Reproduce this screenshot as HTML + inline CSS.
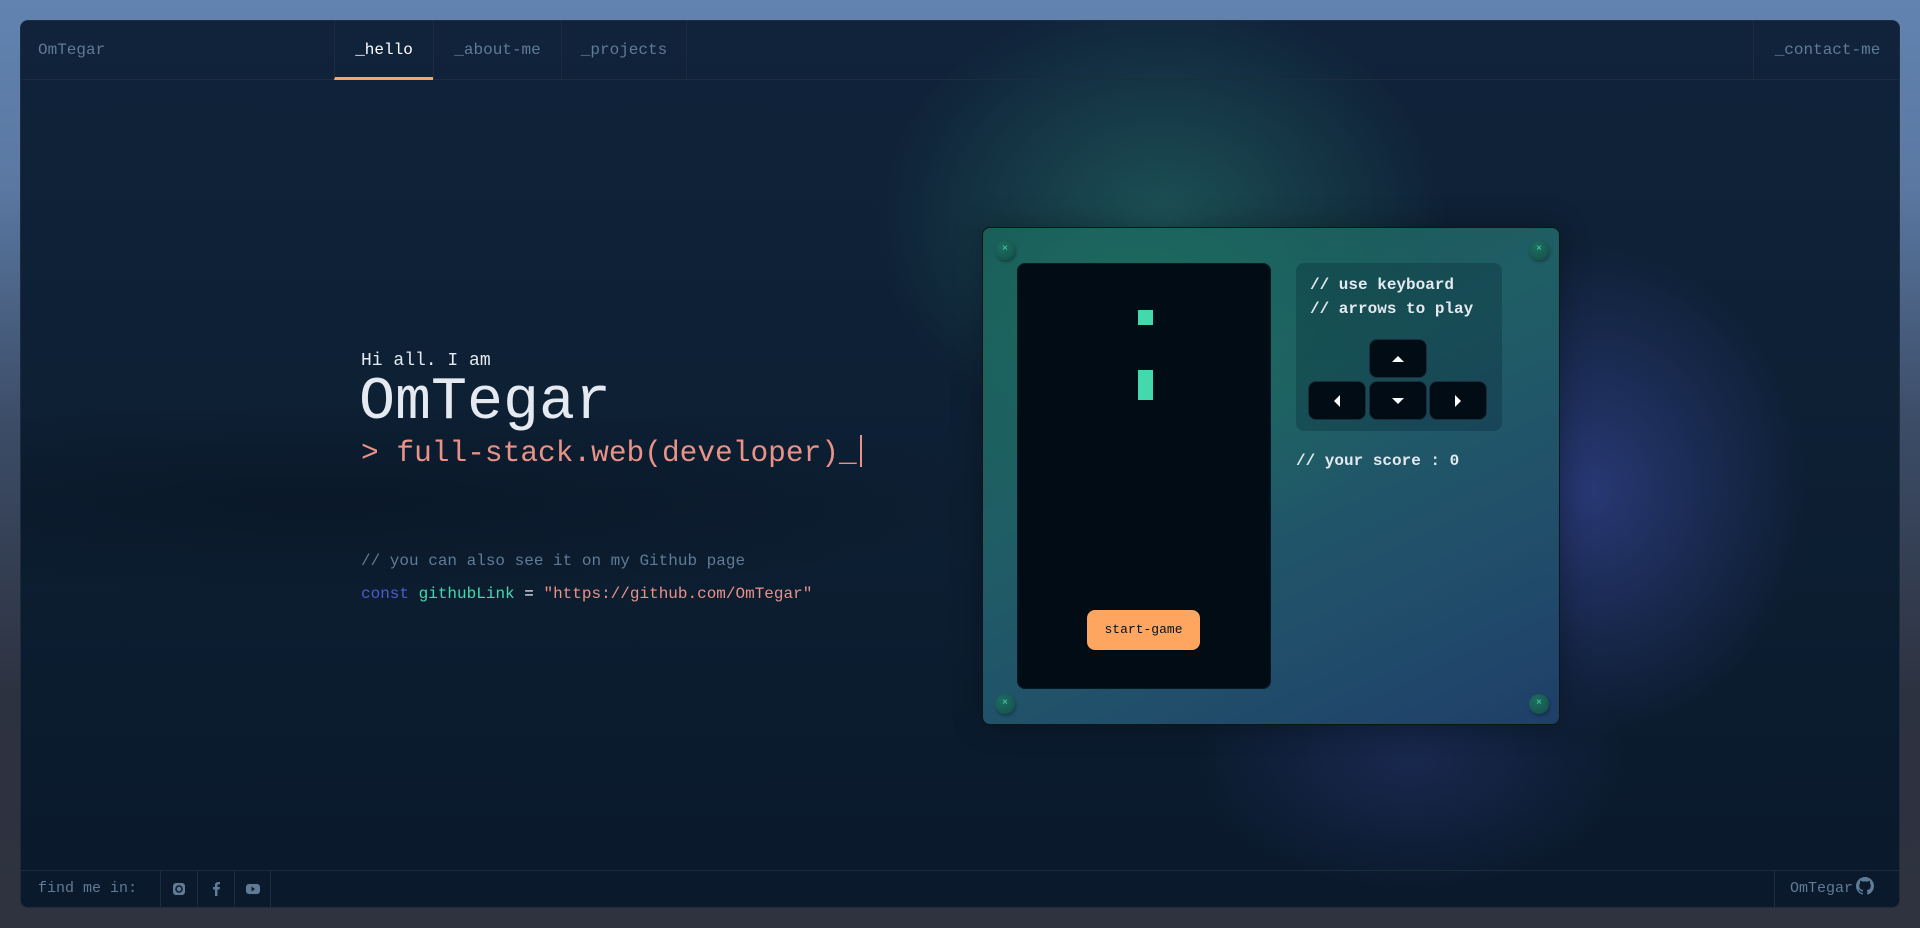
<!DOCTYPE html>
<html><head><meta charset="utf-8"><style>
*{margin:0;padding:0;box-sizing:border-box}
body{width:1920px;height:928px;overflow:hidden;font-family:"Liberation Mono",monospace;background:linear-gradient(180deg,#6283b0 0%,#5a78a2 20%,#3c4d68 45%,#2d3240 75%,#2f3340 100%);position:relative}
.c{position:absolute;left:20px;top:20px;width:1880px;height:888px;border-radius:8px;overflow:hidden;border:1px solid #1e2d3d;
background:
radial-gradient(ellipse 380px 300px at 1140px 200px,rgba(67,217,173,.26),transparent 75%),
radial-gradient(ellipse 300px 340px at 1570px 470px,rgba(77,91,206,.42),transparent 72%),
radial-gradient(ellipse 300px 180px at 1390px 740px,rgba(77,91,206,.2),transparent 72%),
radial-gradient(ellipse 900px 120px at 300px 480px,rgba(5,12,22,.35),transparent 80%),
linear-gradient(180deg,#10233a 0%,#0d1f33 50%,#0a192b 100%)}
.h{position:absolute;left:0;top:0;right:0;height:59px;border-bottom:1px solid #1e2d3d;color:#607b96;font-size:16px}
.h div{position:absolute;top:0;height:58px;line-height:58px;text-align:center}
.t{border-left:1px solid #1e2d3d}
.f{position:absolute;left:0;right:0;bottom:0;height:37px;border-top:1px solid #1e2d3d;color:#607b96;font-size:15px}
.f div{position:absolute;top:0;height:36px;line-height:36px}
.hero{position:absolute;color:#e5e9f0;white-space:pre}
.box{position:absolute;left:961px;top:206px;width:578px;height:498px;border-radius:8px;border:1px solid #0c1616;
background:radial-gradient(ellipse 400px 300px at 150px 80px,#1d6a60,transparent 80%),linear-gradient(155deg,#175553 0%,#1f5e65 40%,#21506b 70%,#1f3f69 100%);box-shadow:0 0 30px rgba(0,0,0,.3)}
.sc{position:absolute;width:20px;height:20px;border-radius:50%;background:radial-gradient(circle at 40% 35%,#1f6e63,#134d47);color:#43d9ad;font-size:10px;text-align:center;line-height:20px;box-shadow:1px 2px 3px rgba(0,0,0,.3)}
.scr{position:absolute;left:34px;top:35px;width:254px;height:426px;background:#010c15;border-radius:8px;box-shadow:inset 0 0 2px #234}
.k{position:absolute;width:58px;height:39px;background:#010c15;border:1px solid #1e2d3d;border-radius:8px}
.k svg{position:absolute;left:50%;top:50%;transform:translate(-50%,-50%)}
.tx{position:absolute;color:#e5e9f0;font-size:16px;white-space:pre;font-weight:bold}
</style></head><body>
<div class="c">
 <div class="h">
  <div style="left:17px;text-align:left">OmTegar</div>
  <div class="t" style="left:313px;width:99px;color:#fff;border-bottom:3px solid #fea55f;height:59px">_hello</div>
  <div class="t" style="left:412px;width:128px">_about-me</div>
  <div class="t" style="left:540px;width:126px;border-right:1px solid #1e2d3d">_projects</div>
  <div class="t" style="left:1732px;width:148px">_contact-me</div>
 </div>

 <div class="hero" style="left:340px;top:330px;font-size:18px">Hi all. I am</div>
 <div class="hero" style="left:338px;top:348px;font-size:60px;line-height:68px">OmTegar</div>
 <div class="hero" style="left:340px;top:414px;font-size:29.5px;color:#e99287;line-height:36px">&gt; full-stack.web(developer)_<span style="display:inline-block;width:2px;height:32px;background:#e99287;vertical-align:-6px;margin-left:3px"></span></div>
 <div class="hero" style="left:340px;top:531px;font-size:16px;color:#607b96">// you can also see it on my Github page</div>
 <div class="hero" style="left:340px;top:564px;font-size:16px"><span style="color:#4d5bce">const</span> <span style="color:#43d9ad">githubLink</span> <span style="color:#fff">=</span> <span style="color:#e99287">"https://github.com/OmTegar"</span></div>

 <div class="box">
  <div class="sc" style="left:12px;top:12px">×</div>
  <div class="sc" style="left:546px;top:12px">×</div>
  <div class="sc" style="left:12px;top:466px">×</div>
  <div class="sc" style="left:546px;top:466px">×</div>
  <div class="scr">
   <div style="position:absolute;left:121px;top:47px;width:15px;height:15px;background:#43d9ad"></div>
   <div style="position:absolute;left:121px;top:107px;width:15px;height:30px;background:#43d9ad"></div>
   <div style="position:absolute;left:70px;top:347px;width:113px;height:40px;background:#fea55f;border-radius:8px;color:#01141f;font-size:13px;text-align:center;line-height:40px">start-game</div>
  </div>
  <div style="position:absolute;left:313px;top:35px;width:206px;height:168px;background:rgba(1,22,39,.25);border-radius:8px"></div>
  <div class="tx" style="left:327px;top:48px">// use keyboard</div>
  <div class="tx" style="left:327px;top:72px">// arrows to play</div>
  <div class="k" style="left:386px;top:111px"><svg width="12" height="8"><path d="M0 7L6 1L12 7Z" fill="#fff"/></svg></div>
  <div class="k" style="left:325px;top:153px"><svg width="8" height="12"><path d="M7 0L1 6L7 12Z" fill="#fff"/></svg></div>
  <div class="k" style="left:386px;top:153px"><svg width="12" height="8"><path d="M0 1L6 7L12 1Z" fill="#fff"/></svg></div>
  <div class="k" style="left:446px;top:153px"><svg width="8" height="12"><path d="M1 0L7 6L1 12Z" fill="#fff"/></svg></div>
  <div class="tx" style="left:313px;top:224px">// your score : 0</div>
 </div>

 <div class="f">
  <div style="left:17px">find me in:</div>
  <div class="t" style="left:139px;width:37px"><svg width="37" height="36"><rect x="12" y="12" width="12" height="12" rx="3" fill="#607b96"/><circle cx="18" cy="18" r="3" fill="none" stroke="#0b1a2c" stroke-width="1.5"/></svg></div>
  <div class="t" style="left:176px;width:37px"><svg width="37" height="36"><path d="M19.5 25V18.5H21.5L22 16H19.5V14.5C19.5 13.8 19.8 13.3 20.8 13.3H22V11.1C21.6 11 20.9 11 20.2 11 18.5 11 17 12 17 14V16H15V18.5H17V25Z" fill="#607b96"/></svg></div>
  <div class="t" style="left:213px;width:37px;border-right:1px solid #1e2d3d"><svg width="37" height="36"><rect x="11" y="13" width="14" height="10" rx="3" fill="#607b96"/><path d="M16.5 15.5L20 18L16.5 20.5Z" fill="#0b1a2c"/></svg></div>
  <div class="t" style="left:1753px;width:127px;padding-left:15px">OmTegar <svg width="18" height="18" style="vertical-align:-3px;margin-left:-6px" viewBox="0 0 16 16"><path fill="#607b96" d="M8 0C3.58 0 0 3.580 0 8c0 3.54 2.29 6.53 5.470 7.59.4.07.55-.17.55-.38v-1.33c-2.23.48-2.7-1.07-2.7-1.07-.36-.92-.89-1.170-.89-1.170-.73-.5.06-.49.06-.49.8.06 1.23.83 1.23.83.71 1.22 1.87.87 2.33.66.07-.52.28-.87.51-1.07-1.78-.2-3.64-.89-3.64-3.95 0-.87.31-1.59.82-2.15-.08-.2-.36-1.02.08-2.12 0 0 .67-.21 2.2.82a7.6 7.6 0 014 0c1.53-1.04 2.2-.82 2.2-.82.44 1.1.16 1.92.08 2.12.51.56.82 1.27.82 2.15 0 3.07-1.87 3.75-3.65 3.95.29.25.54.73.54 1.48v2.2c0 .21.15.46.55.38A8.01 8.01 0 0016 8c0-4.42-3.58-8-8-8z"/></svg></div>
 </div>
</div>
</body></html>
